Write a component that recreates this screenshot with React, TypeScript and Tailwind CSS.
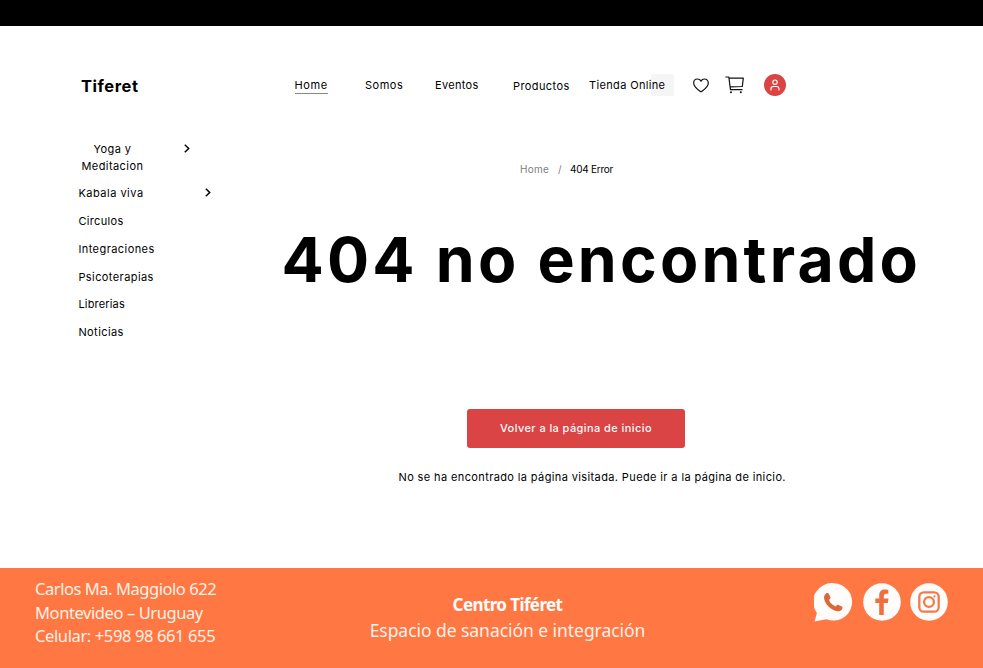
function Heart() {
  return (
    <svg width="16" height="15" viewBox="0 0 16 15" fill="none" stroke="#111" strokeWidth="1.2" strokeLinejoin="round">
      <path d="M4.500 1C2.300 1 .7 2.700.7 4.900.7 9.300 5.600 12 8 13.900c2.400-1.900 7.300-4.600 7.300-9C15.300 2.700 13.700 1 11.500 1 10 1 8.700 1.800 8 3.100 7.300 1.800 6 1 4.500 1Z" />
    </svg>
  );
}

function Cart() {
  return (
    <svg width="20" height="18" viewBox="0 0 20 18" fill="none" stroke="#111" strokeWidth="1.2" strokeLinecap="round" strokeLinejoin="round">
      <path d="M.8 1h3l1.700 12.700h11.500M4 2.100h14.300l-1 8.400L5.100 10.900" />
      <circle cx="6" cy="16.200" r="1" fill="#111" stroke="none" />
      <circle cx="15.800" cy="16.200" r="1" fill="#111" stroke="none" />
    </svg>
  );
}

function User() {
  return (
    <svg width="22" height="22" viewBox="0 0 22 22" fill="none" stroke="#fff" strokeWidth="1.1" strokeLinecap="round">
      <circle cx="11" cy="8.200" r="2.200" />
      <path d="M7 16v-1.200a2.300 2.300 0 0 1 2.300-2.300h3.400a2.300 2.300 0 0 1 2.300 2.300V16" />
    </svg>
  );
}

function Chevron() {
  return (
    <svg width="6" height="9" viewBox="0 0 6 9" fill="none" stroke="#000" strokeWidth="1.500">
      <path d="M.8.7 4.700 4.500.8 8.300" />
    </svg>
  );
}

function WhatsApp() {
  return (
    <svg width="39" height="39" viewBox="0 0 39 39">
      <path fill="#fffdfb" d="M19.900.2a18.700 18.700 0 1 1-7.600 36L.6 38.500l2.300-8.500A18.700 18.700 0 0 1 19.900.2Z" />
      <path fill="#d9683a" d="M12 10.400c1-.7 2.200-.6 2.800.4l1.500 3.100c.4 1-.1 1.900-1.300 2.900.8 2.900 3.600 5.700 6.600 6.600 1-1.300 1.900-1.900 2.900-1.500l3.200 1.600c1 .6 1 1.800.3 2.800-1.300 1.900-3.500 2.500-6 1.700-5.400-1.600-10.300-6.300-11.700-11.600-.6-2.400-.1-4.700 1.700-6Z" />
    </svg>
  );
}

function Facebook() {
  return (
    <svg width="38" height="38" viewBox="0 0 38 38">
      <circle cx="19" cy="19" r="18.800" fill="#fffdfb" />
      <path fill="#ee7040" d="M16.200 32V19.900h-3.900v-4.300h3.900v-3.500c0-3.700 2.200-5.700 5.600-5.700 1.700 0 3.500.3 3.500.3v4h-2c-1.900 0-2.500 1-2.500 2.300v2.600h4.700l-.7 4.300h-4V32Z" />
    </svg>
  );
}

function Instagram() {
  return (
    <svg width="38" height="38" viewBox="0 0 38 38" fill="none" stroke="#f27a4c" strokeWidth="2.300">
      <circle cx="19" cy="19" r="18.800" fill="#fffdfb" stroke="none" />
      <rect x="9.300" y="9.300" width="19.400" height="19.400" rx="4.500" />
      <circle cx="19" cy="19" r="4.900" />
      <circle cx="24.500" cy="13.300" r="1.100" fill="#f27a4c" stroke="none" />
    </svg>
  );
}

const sections = [
  { label: "Circulos", tracking: "tracking-[0.35px]" },
  { label: "Integraciones", tracking: "tracking-[0.43px]" },
  { label: "Psicoterapias", tracking: "tracking-[0.42px]" },
  { label: "Librerias", tracking: "tracking-[0.18px]" },
  { label: "Noticias", tracking: "tracking-[0.42px]" },
];

export default function App() {
  return (
    <div className="flex h-[668px] w-[983px] flex-col overflow-hidden bg-white font-['Inter',sans-serif] text-[11px] text-black">
      <div className="h-[26px] shrink-0 bg-black" />
      <header className="mt-[47px] flex h-6 shrink-0 items-center whitespace-nowrap pl-[81px]">
        <div className="w-[213px] pt-0.5 text-[16.500px] font-bold tracking-[0.55px]">Tiferet</div>
        <nav className="flex items-center leading-4">
          <div className="w-[71px]">
            <a className="ml-[0.5px] inline-block border-b border-[#888] leading-[15px] tracking-[0.6px]">Home</a>
          </div>
          <a className="w-[70px] tracking-[0.5px]">Somos</a>
          <a className="w-[78px] tracking-[0.3px]">Eventos</a>
          <a className="w-[76px] pt-0.5 tracking-[0.4px]">Productos</a>
          <div className="relative w-[105px]">
            <span className="absolute -top-[3px] left-[62px] h-[22px] w-[23px] rounded-[2px] bg-[#f5f5f5]" />
            <a className="relative tracking-[0.35px]">Tienda Online</a>
          </div>
        </nav>
        <div className="flex items-center">
          <div className="-ml-px w-8"><Heart /></div>
          <div className="w-[39px]"><Cart /></div>
          <div className="size-[22px] rounded-full bg-[#db4444]"><User /></div>
        </div>
      </header>

      <div className="flex grow">
        <aside className="w-[281px] shrink-0 pl-[78.400px] pt-[43.800px]">
          <div className="flex flex-col gap-[10.700px] leading-[17px]">
            <div className="flex">
              <div className="w-[105.600px] pl-[3px]">
                <div className="w-[62px] text-center tracking-[0.43px]">Yoga y Meditacion</div>
              </div>
              <div className="pt-[3px]"><Chevron /></div>
            </div>
            <div className="flex items-center">
              <div className="w-[126.600px] tracking-[0.5px]">Kabala viva</div>
              <div className="-mt-0.5"><Chevron /></div>
            </div>
            {sections.map((s) => (
              <div key={s.label} className={s.tracking}>{s.label}</div>
            ))}
          </div>
        </aside>
        <main className="flex grow flex-col items-start whitespace-nowrap">
          <div className="ml-[239px] mt-16 flex text-[10px] leading-4">
            <span className="w-[38px] tracking-[0.25px] text-[#808080]">Home</span>
            <span className="w-[12px] text-[#808080]">/</span>
            <span className="tracking-[-0.260px]">404 Error</span>
          </div>
          <h1 className="ml-[0.5px] mt-[42px] text-[62.500px] font-bold leading-[80px] tracking-[3.200px]">404 no encontrado</h1>
          <button className="ml-[186px] mt-[109.500px] h-[39px] w-[218px] rounded-[3px] bg-[#db4444] pt-px font-medium tracking-[0.42px] text-[#fafafa]">
            Volver a la página de inicio
          </button>
          <p className="ml-[117.5px] mt-[20.500px] leading-[18px] tracking-[0.38px]">
            No se ha encontrado la página visitada. Puede ir a la página de inicio.
          </p>
        </main>
      </div>

      <footer className="flex h-[100px] shrink-0 whitespace-nowrap bg-[#ff7742] font-['Noto_Sans',sans-serif] text-[#fff1e8]">
        <div className="w-[369px] pl-[35px] pt-[9.400px] text-[16.500px] leading-[23.300px]">
          <div className="tracking-[-0.450px]">Carlos Ma. Maggiolo 622</div>
          <div className="tracking-[-0.410px]">Montevideo – Uruguay</div>
          <div className="tracking-[-0.380px]">Celular: +598 98 661 655</div>
        </div>
        <div className="w-[277px] pt-6 text-center">
          <div className="text-[17px] font-bold leading-[26px] tracking-[-0.600px] text-white">Centro Tiféret</div>
          <div className="text-[17.500px] leading-[25px] tracking-[-0.050px]">Espacio de sanación e integración</div>
        </div>
        <div className="flex gap-[9.500px] pl-[168px] pt-[15px]">
          <WhatsApp />
          <Facebook />
          <Instagram />
        </div>
      </footer>
    </div>
  );
}
